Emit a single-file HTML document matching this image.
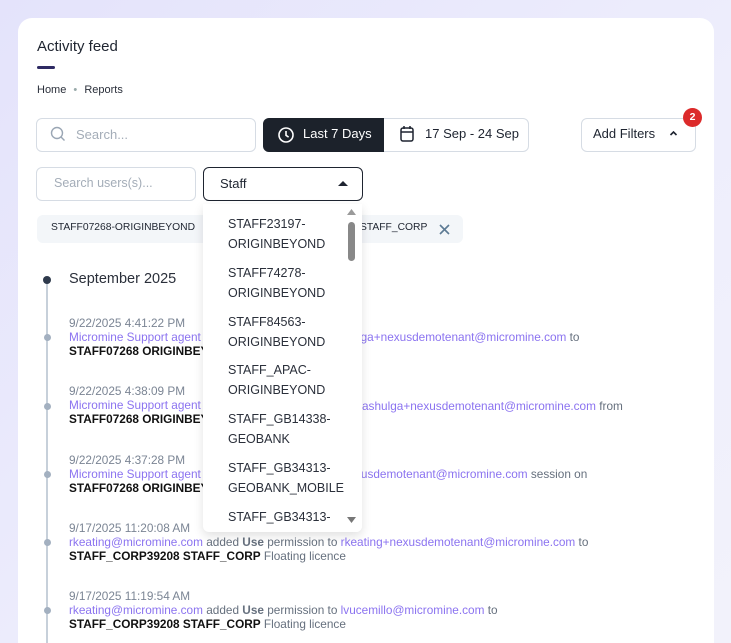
<!DOCTYPE html>
<html style="overflow:hidden"><head><meta charset="utf-8"><style>
*{margin:0;padding:0;box-sizing:border-box}
html,body{width:731px;height:643px;overflow:hidden}
body{background:linear-gradient(135deg,#e4e3fb,#eeeefc 60%,#f2f2fb);font-family:"Liberation Sans",sans-serif;position:relative;color:#1e2430}
.card{position:absolute;left:18px;top:18px;width:696px;height:625px;background:#fff;border-radius:14px 14px 0 0}
.a{position:absolute;white-space:nowrap}
.box{position:absolute;border:1px solid #d6dce4;border-radius:6px;background:#fff}
.t{font-size:11.8px;line-height:14px;color:#2a2f3a}
.d{color:#7b8594}
.p{color:#8b73f0}
.b{font-weight:bold;color:#111}
.g{color:#66707e}
.dot{position:absolute;left:44px;width:7px;height:7px;border-radius:50%;background:#a3b0c0}
.it{position:absolute;left:228px;font-size:12.5px;line-height:20px;color:#2a2f3a}
</style></head><body>
<div class="card"></div>
<div class="a" style="left:37px;top:38px;font-size:15px;color:#1e2430">Activity feed</div>
<div class="a" style="left:37px;top:66px;width:18px;height:3px;border-radius:2px;background:#2e2a63"></div>
<div class="a" style="left:37px;top:84px;font-size:11px;color:#2a2f3a">Home <span style="color:#9aa;margin:0 4px">•</span> Reports</div>

<div class="box" style="left:36px;top:118px;width:220px;height:34px"></div>
<svg class="a" style="left:50px;top:126px" width="16" height="16" viewBox="0 0 16 16"><circle cx="7" cy="7" r="5.5" fill="none" stroke="#9aa6b4" stroke-width="1.4"/><path d="M11 11l3.5 3.5" stroke="#9aa6b4" stroke-width="1.4"/></svg>
<div class="a" style="left:76px;top:127px;font-size:13px;color:#a4adb8">Search...</div>

<div class="box" style="left:263px;top:118px;width:266px;height:34px"></div>
<div class="a" style="left:263px;top:118px;width:121px;height:34px;background:#1c222b;border-radius:6px 0 0 6px"></div>
<svg class="a" style="left:277px;top:126px" width="18" height="18" viewBox="0 0 18 18"><circle cx="9" cy="9" r="7" fill="none" stroke="#fff" stroke-width="1.6"/><path d="M9 5v4.3l2.6 1.8" fill="none" stroke="#fff" stroke-width="1.6"/></svg>
<div class="a" style="left:303px;top:126px;font-size:13px;color:#fff">Last 7 Days</div>
<svg class="a" style="left:399px;top:125px" width="16" height="18" viewBox="0 0 16 18"><rect x="2" y="3" width="12" height="13" rx="2" fill="none" stroke="#1e2430" stroke-width="1.5"/><path d="M2 7h12M5 1v3M11 1v3" stroke="#1e2430" stroke-width="1.5"/></svg>
<div class="a" style="left:425px;top:126px;font-size:13px;color:#1e2430">17 Sep - 24 Sep</div>

<div class="box" style="left:581px;top:118px;width:115px;height:34px"></div>
<div class="a" style="left:593px;top:126px;font-size:13px;color:#1e2430">Add Filters</div>
<svg class="a" style="left:669px;top:130px" width="9" height="7" viewBox="0 0 9 7"><path d="M1.5 5L4.5 2l3 3" fill="none" stroke="#1e2430" stroke-width="1.6"/></svg>
<div class="a" style="left:683px;top:108px;width:19px;height:19px;border-radius:50%;background:#dc2a2a;color:#fff;font-size:10.5px;font-weight:bold;text-align:center;line-height:19px">2</div>

<div class="box" style="left:36px;top:167px;width:160px;height:34px"></div>
<div class="a" style="left:54px;top:176px;font-size:12.5px;color:#a4adb8">Search users(s)...</div>
<div class="a" style="left:203px;top:167px;width:160px;height:34px;border:1px solid #1e2430;border-radius:6px"></div>
<div class="a" style="left:220px;top:176px;font-size:13px;color:#1e2430">Staff</div>
<svg class="a" style="left:338px;top:180px" width="10" height="6"><path d="M0 6L5 1l5 5z" fill="#1e2430"/></svg>

<div class="a" style="left:37px;top:215px;width:426px;height:28px;background:#f3f6f9;border-radius:6px"></div>
<div class="a" style="left:51px;top:222px;font-size:10.3px;color:#1e2430">STAFF07268-ORIGINBEYOND</div>
<div class="a" style="left:360px;top:222px;font-size:10.3px;color:#1e2430">STAFF_CORP</div>
<svg class="a" style="left:439px;top:224px" width="11" height="11"><path d="M1 1l9 9M10 1l-9 9" stroke="#5d7a94" stroke-width="1.6"/></svg>

<div class="a" style="left:46px;top:280px;width:2px;height:363px;background:#c7d0da"></div>
<div class="a" style="left:43px;top:276px;width:8px;height:8px;border-radius:50%;background:#2e3a4c"></div>
<div class="a" style="left:69px;top:271px;font-size:14.5px;color:#2a2f3a">September 2025</div>

<div class="dot" style="top:334px"></div>
<div class="a t" style="left:69px;top:316px"><span class="d">9/22/2025 4:41:22 PM</span><br><span class="p">Micromine Support agent a</span><br><span class="b">STAFF07268 ORIGINBEYO</span></div>
<div class="a t" style="left:358px;top:330px"><span class="p">lga+nexusdemotenant@micromine.com</span> <span class="g">to</span></div>

<div class="dot" style="top:403px"></div>
<div class="a t" style="left:69px;top:384px"><span class="d">9/22/2025 4:38:09 PM</span><br><span class="p">Micromine Support agent r</span><br><span class="b">STAFF07268 ORIGINBEYO</span></div>
<div class="a t" style="left:362px;top:399px"><span class="p">ashulga+nexusdemotenant@micromine.com</span> <span class="g">from</span></div>

<div class="dot" style="top:471px"></div>
<div class="a t" style="left:69px;top:453px"><span class="d">9/22/2025 4:37:28 PM</span><br><span class="p">Micromine Support agent r</span><br><span class="b">STAFF07268 ORIGINBEYO</span></div>
<div class="a t" style="left:355px;top:467px"><span class="p">xusdemotenant@micromine.com</span> <span class="g">session on</span></div>

<div class="dot" style="top:539px"></div>
<div class="a t" style="left:69px;top:521px"><span class="d">9/17/2025 11:20:08 AM</span><br><span class="p">rkeating@micromine.com</span> <span class="g">added <b>Use</b> permission to</span> <span class="p">rkeating+nexusdemotenant@micromine.com</span> <span class="g">to</span><br><span class="b">STAFF_CORP39208 STAFF_CORP</span> <span class="g">Floating licence</span></div>

<div class="dot" style="top:607px"></div>
<div class="a t" style="left:69px;top:589px"><span class="d">9/17/2025 11:19:54 AM</span><br><span class="p">rkeating@micromine.com</span> <span class="g">added <b>Use</b> permission to</span> <span class="p">lvucemillo@micromine.com</span> <span class="g">to</span><br><span class="b">STAFF_CORP39208 STAFF_CORP</span> <span class="g">Floating licence</span></div>

<div class="a" style="left:203px;top:204px;width:159px;height:328px;background:#fff;border-radius:0 0 6px 6px;box-shadow:0 4px 10px rgba(0,0,0,.12);overflow:hidden">
<div class="it" style="top:10px;left:25px">STAFF23197-<br>ORIGINBEYOND</div>
<div class="it" style="top:59px;left:25px">STAFF74278-<br>ORIGINBEYOND</div>
<div class="it" style="top:108px;left:25px">STAFF84563-<br>ORIGINBEYOND</div>
<div class="it" style="top:156px;left:25px">STAFF_APAC-<br>ORIGINBEYOND</div>
<div class="it" style="top:205px;left:25px">STAFF_GB14338-<br>GEOBANK</div>
<div class="it" style="top:254px;left:25px">STAFF_GB34313-<br>GEOBANK_MOBILE</div>
<div class="it" style="top:303px;left:25px">STAFF_GB34313-</div>
<div class="a" style="left:143px;top:0;width:16px;height:328px;background:#fff"></div>
<svg class="a" style="left:144px;top:5px" width="9" height="6"><path d="M0 6L4.5 0 9 6z" fill="#9a9a9a"/></svg>
<div class="a" style="left:145px;top:18px;width:7px;height:39px;border-radius:4px;background:#888"></div>
<svg class="a" style="left:144px;top:313px" width="9" height="6"><path d="M0 0h9L4.5 6z" fill="#777"/></svg>
</div>
</body></html>
